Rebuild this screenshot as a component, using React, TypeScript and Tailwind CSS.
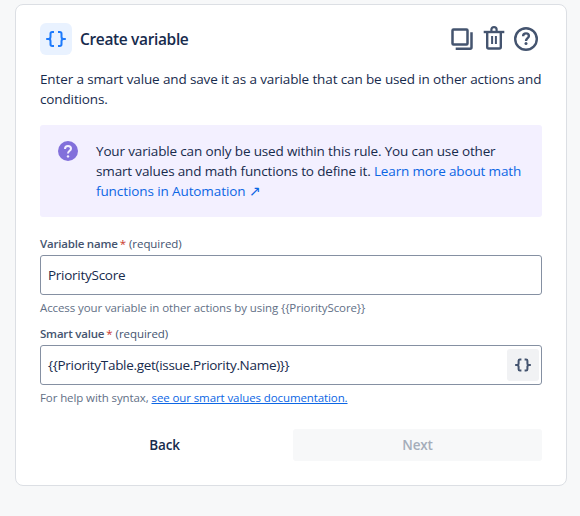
import type { ReactNode } from "react";

function BracesIcon({ className }: { className?: string }) {
  return (
    <svg viewBox="0 0 20 16" className={className} fill="none" stroke="currentColor" strokeLinejoin="round">
      <path d="M8 1H6.2Q4.5 1 4.5 2.7V5.7Q4.5 8 2.3 8H0.2M2.3 8Q4.5 8 4.5 10.3V13.3Q4.5 15 6.2 15H8" />
      <path d="M12 1H13.8Q15.5 1 15.5 2.7V5.7Q15.5 8 17.7 8H19.8M17.7 8Q15.5 8 15.5 10.3V13.3Q15.5 15 13.8 15H12" />
    </svg>
  );
}

function CopyIcon() {
  return (
    <svg viewBox="0 0 24 24" className="size-6" fill="none" stroke="currentColor" strokeWidth="2.5">
      <rect x="2.5" y="2.4" width="15" height="15.2" rx="1" />
      <path d="M21.5 5.3V20.3Q21.5 21.7 20.1 21.7H5.7" />
    </svg>
  );
}

function TrashIcon() {
  return (
    <svg viewBox="0 1 24 24" className="size-6 overflow-visible" fill="none" stroke="currentColor" strokeWidth="2.4">
      <path d="M1.7 6H22.3" />
      <path d="M9.4 5.5V3.6Q9.4 1.1 12 1.1T14.6 3.6V5.5" strokeWidth="2.2" />
      <path d="M5.2 6.5V21Q5.2 22.5 6.7 22.5H17.3Q18.8 22.5 18.8 21V6.5" />
      <path d="M10.1 10V18M13.9 10V18" strokeWidth="2" />
    </svg>
  );
}

function HelpIcon() {
  return (
    <svg viewBox="0 0 24 24" className="size-6" fill="none" stroke="currentColor" strokeWidth="2.4">
      <circle cx="12" cy="12" r="10.8" />
      <path d="M9.1 9.2C9.1 7.2 10.3 6.4 12 6.4S14.9 7.4 14.9 9C14.9 11.2 12 11.2 12 13.9" />
      <circle cx="12" cy="16.5" r="1.5" fill="currentColor" stroke="none" />
    </svg>
  );
}

function Label({ children }: { children: ReactNode }) {
  return (
    <div className="flex h-4 items-center whitespace-nowrap text-[11.5px] leading-4 text-[#44546f]">
      <span className="font-semibold tracking-[-0.2px]">{children}</span>
      <span className="ml-0.5 text-[#c9372c]">*</span>
      <span className="ml-[3px] tracking-[-0.05px]">(required)</span>
    </div>
  );
}

export default function App() {
  return (
    <main className="h-[516px] w-[580px] bg-[#f7f8f9] pl-[15px] pt-1 font-['Open_Sans','Noto_Sans',sans-serif] text-[13.5px] leading-5 text-[#172b4d]">
      <section className="h-[482px] w-[552px] rounded-lg border border-[#dcdfe4] bg-white px-6 pt-[18px]">
        <header className="flex h-8 items-center">
          <div className="flex size-8 items-center justify-center rounded-md bg-[#e9f2ff]">
            <BracesIcon className="h-4 w-5 stroke-2 text-[#1d7afc]" />
          </div>
          <h1 className="ml-2 text-[15.5px] font-semibold tracking-[-0.35px]">Create variable</h1>
          <div className="ml-auto mr-1 flex gap-2 text-[#44546f]">
            <button><CopyIcon /></button>
            <button><TrashIcon /></button>
            <button><HelpIcon /></button>
          </div>
        </header>

        <p className="mt-3.5 whitespace-nowrap tracking-[-0.13px]">
          Enter a smart value and save it as a variable that can be used in other actions and
          <br />
          conditions.
        </p>

        <div className="mt-4 flex h-[92px] rounded-[3px] bg-[#f3f0ff] p-4">
          <svg viewBox="0 0 20 20" className="ml-0.5 size-5 shrink-0" fill="none">
            <circle cx="10" cy="10" r="10" fill="#8270db" />
            <path d="M7 7.9C7 5.9 8.2 5 10 5S13 6 13 7.7C13 9.9 10 9.8 10 12.6" stroke="#f3f0ff" strokeWidth="2" />
            <circle cx="10" cy="15.4" r="1.2" fill="#f3f0ff" />
          </svg>
          <p className="ml-[18px] whitespace-nowrap tracking-[-0.15px]">
            Your variable can only be used within this rule. You can use other
            <br />
            smart values and math functions to define it. <a className="text-[#0c66e4]">Learn more about math</a>
            <br />
            <a className="text-[#0c66e4]"><span className="tracking-[-0.1px]">functions in Automation</span> ↗</a>
          </p>
        </div>

        <div className="mt-[19px]">
          <Label>Variable name</Label>
          <div className="mt-[3px] flex h-10 items-center rounded-[3px] border border-[#8590a2] px-[7px]">
            <span className="tracking-[-0.27px]">PriorityScore</span>
          </div>
          <p className="mt-[5px] text-[11.5px] leading-4 tracking-[-0.1px] text-[#626f86]">
            Access your variable in other actions by using {"{{PriorityScore}}"}
          </p>
        </div>

        <div className="mt-[10px]">
          <Label>Smart value</Label>
          <div className="mt-[3px] flex h-10 items-center justify-between rounded-[3px] border border-[#8590a2] pl-[7px] pr-0.5">
            <span className="tracking-[-0.3px]">{"{{PriorityTable.get(issue.Priority.Name)}}"}</span>
            <button className="flex size-8 items-center justify-center rounded-[3px] bg-[#f1f2f4]">
              <BracesIcon className="h-[14px] w-4 stroke-[2.5] text-[#44546f]" />
            </button>
          </div>
          <p className="mt-[5px] text-[11.5px] leading-4 tracking-[-0.1px] text-[#626f86]">
            For help with syntax, <a className="text-[#0c66e4] underline">see our smart values documentation.</a>
          </p>
        </div>

        <div className="mt-[23px] grid h-8 grid-cols-2 gap-1 font-semibold tracking-[-0.2px]">
          <button>Back</button>
          <button className="rounded-[3px] bg-[#f7f8f9] text-[#a5adba]">Next</button>
        </div>
      </section>
    </main>
  );
}
